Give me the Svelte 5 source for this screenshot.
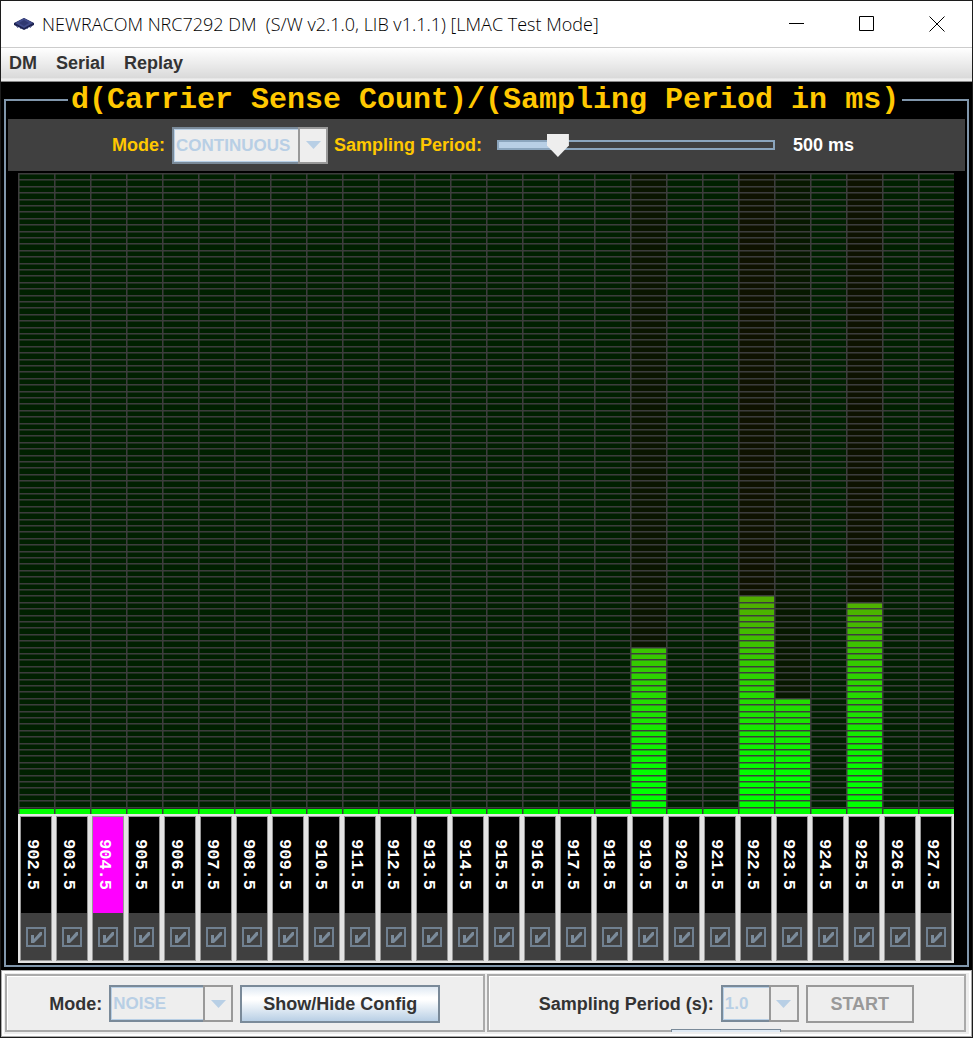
<script>
  const channels = Array.from({ length: 26 }, (_, i) => (902.5 + i).toFixed(1));
  const levels = { '919.5': 26, '922.5': 34, '923.5': 18, '925.5': 33 };
  const selected = '904.5';
  const rows = 100;
  const rowHeight = 6.4;
  const edge = (row) => Math.round(row * rowHeight);
  const shade = (n) => {
    const shift = Math.max(0, (n - 5) * 2.9);
    return `rgb(${Math.round(shift)},${Math.round(255 - shift)},0)`;
  };
  const tint = (level) => `rgb(${Math.round(level * 0.4)},${Math.round(32 - level * 0.42)},0)`;
  const lines = Array.from({ length: rows }, (_, i) => edge(i));
  const cells = channels.flatMap((c, x) =>
    Array.from({ length: levels[c] ?? 0 }, (_, n) => ({
      x: x * 36,
      y: edge(rows - 1 - n),
      h: edge(rows - n) - edge(rows - 1 - n),
      fill: shade(n)
    }))
  );
</script>

{#snippet arrow()}
  <i><svg width="15" height="8"><path d="M0 0h15L7.5 8z" /></svg></i>
{/snippet}

<div class="window">
  <header class="titlebar">
    <svg class="logo" viewBox="0 0 22 14" width="22" height="14">
      <path d="M1 6 11 1l10 5v2l-10 5L1 8z" fill="#1d2250" />
      <path d="M2 6 11 1l9 5-9 5z" fill="#414b8a" />
      <path d="m6 6 5-3 5 3-5 3z" fill="#303871" />
      <path d="m3 9 2 2m1-1 2 2m6 0 2-2m1 1 2-2" stroke="#7880b0" />
    </svg>
    <h1>NEWRACOM NRC7292 DM&nbsp; (S/W v2.1.0, LIB v1.1.1) [LMAC Test Mode]</h1>
    <button aria-label="Minimize"><svg width="16" height="16"><path d="M0 7.5h15" /></svg></button>
    <button aria-label="Maximize"><svg width="16" height="16"><path d="M.5.5h14v14H.5z" /></svg></button>
    <button aria-label="Close"><svg width="16" height="16"><path d="m.5.5 15 15m0-15-15 15" /></svg></button>
  </header>
  <nav>
    <button>DM</button><button>Serial</button><button>Replay</button>
  </nav>

  <main>
    <fieldset>
      <legend>d(Carrier Sense Count)/(Sampling Period in ms)</legend>
      <div class="toolbar">
        <label for="mode">Mode:</label>
        <span class="combo scan">
          <select id="mode" disabled><option>CONTINUOUS</option></select>
          {@render arrow()}
        </span>
        <label for="period">Sampling Period:</label>
        <input class="slider" id="period" type="range" min="0" max="100" value="19" />
        <output for="period">500 ms</output>
      </div>
      <div class="plot">
        <svg class="chart" viewBox="0 0 936 641" preserveAspectRatio="none" role="img" aria-label="Carrier sense count per channel">
          <rect width="936" height="641" fill="#002000" />
          {#each channels as c, x}
            {#if levels[c]}
              <rect x={x * 36} y="0" width="36" height="641" fill={tint(levels[c])} />
            {/if}
          {/each}
          {#each cells as cell}
            <rect x={cell.x} y={cell.y} width="36" height={cell.h} fill={cell.fill} />
          {/each}
          {#each lines as y}
            <rect class="line" x="0" {y} width="936" height="1" />
            <rect class="soft" x="0" y={y + 1} width="936" height="1" />
          {/each}
          <rect y="636" width="936" height="5" fill="#00ff00" />
          {#each channels as c, x}
            <rect class="line" x={x * 36} y="0" width="1" height="641" />
            <rect class="soft" x={x * 36 + 1} y="0" width="1" height="641" />
          {/each}
        </svg>
        <div class="channels">
          {#each channels as c}
            <label class="channel" class:selected={c === selected}>
              <span class="freq"><b>{c}</b></span>
              <span class="tick">
                <input type="checkbox" checked disabled />
                <svg viewBox="0 0 20 20" width="20" height="20">
                  <path d="M1 1h18v18H1z" />
                  <path class="mark" d="M5 8h3v4l6-7h2v3l-8 8H5z" />
                </svg>
              </span>
            </label>
          {/each}
        </div>
      </div>
    </fieldset>
  </main>

  <footer>
    <section>
      <label for="source">Mode:</label>
      <span class="combo noise">
        <select id="source" disabled><option>NOISE</option></select>
        {@render arrow()}
      </span>
      <button class="config">Show/Hide Config</button>
    </section>
    <section>
      <label for="seconds">Sampling Period (s):</label>
      <span class="combo seconds">
        <select id="seconds" disabled><option>1.0</option></select>
        {@render arrow()}
      </span>
      <button class="start" disabled>START</button>
      <span class="peek"></span>
    </section>
  </footer>
</div>

<style>
  :global(body) { background: #1c1c1c; }
  * { box-sizing: border-box; }
  .window {
    display: flex;
    flex-direction: column;
    min-height: 100vh;
    padding: 1px;
    font: bold 18px "Liberation Sans", Arial, sans-serif;
    color: #333;
  }
  button, select { font: inherit; color: inherit; }
  button { padding: 0; border: 0; background: none; }
  label { white-space: nowrap; }
  .titlebar { display: flex; align-items: center; height: 46px; padding-left: 12px; background: #fff; }
  .logo { margin-right: 7px; }
  h1 { flex: 1; margin: 0; color: #000; font: 300 18px "Open Sans", "Noto Sans", sans-serif; white-space: nowrap; }
  .titlebar button { display: grid; place-items: center; width: 70px; height: 46px; }
  .titlebar button path { fill: none; stroke: #000; }
  nav {
    display: flex;
    gap: 19px;
    height: 35px;
    padding: 0 8px 2px;
    border-top: 1px solid #ccc;
    border-bottom: 1px solid #888;
    background: linear-gradient(#fff, #dadada 90%, #eee 94%);
  }
  main { padding: 3px; background: #000; }
  fieldset { min-width: 0; margin: 0; padding: 4px 2px 2px; border: 2px solid #8096ab; }
  legend { margin-left: 60px; padding: 0 3px; color: #ffc800; font: bold 30px/30px "Courier New", "Liberation Mono", monospace; white-space: nowrap; }
  .toolbar { display: flex; align-items: center; height: 52px; padding-left: 104px; background: #404040; color: #ffc800; }
  .combo { position: relative; display: flex; height: 37px; }
  .combo select { width: 100%; padding: 0 2px; appearance: none; border: 2px solid #7a8a99; border-radius: 0; background: #eee; opacity: 1; color: #b8cfe5; font-size: 17px; box-shadow: inset 0 0 0 1px #b8cfe5; }
  .combo i { position: absolute; inset: 0 0 0 auto; display: grid; place-items: center; width: 30px; border: 2px solid #999; background: #eee; }
  .combo path { fill: #b8cfe5; }
  .scan { width: 156px; margin: 0 6px 0 7px; }
  .slider { appearance: none; width: 278px; height: 24px; margin: 0 18px 0 15px; background: none; }
  .slider::-webkit-slider-runnable-track { height: 10px; border: 2px solid #8ba5bd; background: linear-gradient(90deg, #b8cfe5 20%, #404040 20%); }
  .slider::-webkit-slider-thumb { appearance: none; width: 22px; height: 23px; margin-top: -8px; background: #eee; clip-path: polygon(0 0, 100% 0, 100% 50%, 50% 100%, 0 50%); }
  output { color: #fff; }
  .plot { padding: 2px 11px 0 10px; }
  .chart { display: block; width: 100%; height: 641px; }
  .line { fill: #3c3c3c; }
  .soft { fill: #404040; opacity: .5; }
  .channels { display: grid; grid-template-columns: repeat(26, 1fr); height: 149px; }
  .channel { display: flex; flex-direction: column; min-width: 0; padding: 1px; border: 2px solid #e4e4e4; background: #999; color: #fff; }
  .freq { display: flex; flex: 1; align-items: center; justify-content: center; padding-right: 8px; background: #000; }
  .freq b { writing-mode: vertical-rl; font: bold 17px/18px "Liberation Mono", monospace; }
  .selected .freq { background: #f0f; }
  .tick { position: relative; display: grid; place-items: center; height: 47px; background: #404040; }
  .tick input { position: absolute; margin: 0; opacity: 0; }
  .tick path { fill: none; stroke: #708090; stroke-width: 2; }
  .tick .mark { fill: #7a8a99; stroke: none; }
  footer { display: flex; flex: 1; gap: 2px; padding: 3px 5px 4px 3px; border: 1px solid #aaa; background: #eee; box-shadow: inset 0 0 0 2px #fff; }
  section { position: relative; display: flex; flex: 1; align-items: center; justify-content: center; gap: 7px; padding-top: 1px; border: 2px solid #aaa; box-shadow: inset 1px 1px #fff; }
  label[for="source"], label[for="seconds"], .config, .start { padding-top: 2px; }
  .noise { width: 124px; }
  .seconds { width: 78px; }
  .config { width: 200px; height: 38px; border: 2px solid #7a8a99; background: linear-gradient(#dfe9f3, #fff 30%, #fff 38%, #b8cfe5); }
  .start { width: 108px; height: 38px; border: 2px solid #999; color: #999; }
  .peek { position: absolute; bottom: -2px; left: 182px; width: 110px; height: 3px; border: 1px solid #7a8a99; border-bottom: 0; background: #dfe9f3; }
</style>
